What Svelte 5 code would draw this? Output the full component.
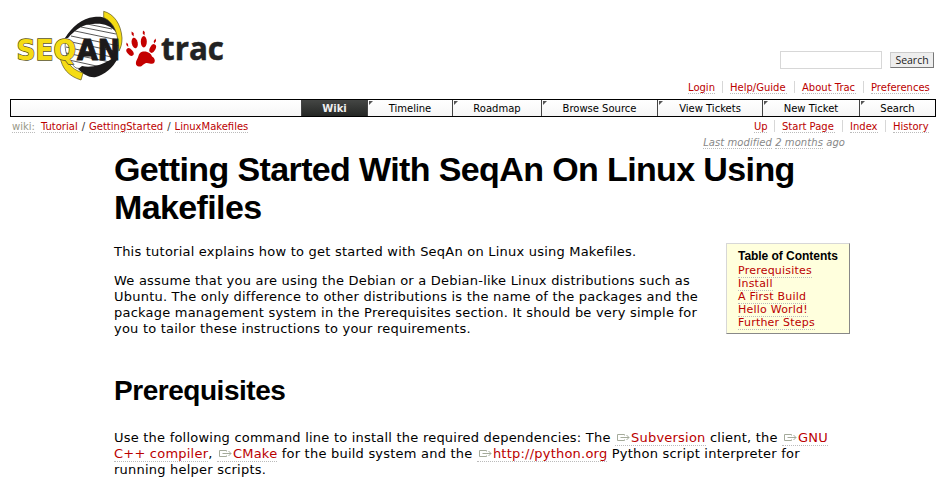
<script>
  const meta = [['Login', 27], ['Help/Guide', 57], ['About Trac', 54], ['Preferences', 58]];
  const context = [['Up', 13], ['Start Page', 53], ['Index', 28], ['History', 36]];
  const tabs = [['Wiki', 66], ['Timeline', 85], ['Roadmap', 89], ['Browse Source', 116], ['View Tickets', 105], ['New Ticket', 97], ['Search', 76]];
  const toc = ['Prerequisites', 'Install', 'A First Build', 'Hello World!', 'Further Steps'];
</script>

{#snippet ext(label)}<a class="ext" href="#top"><svg width="13" height="9" viewBox="0 0 13 9" fill="none" stroke="#a5ab9b"><path d="M7.500 2.500V1.500h-7v6h7V6.500M3.500 4.500h8.500M9.500 2l2.500 2.500L9.500 7" /></svg>{label}</a>{/snippet}

<div class="page">
  <header>
    <svg class="logo" width="210" height="72" viewBox="0 0 210 72">
      <path d="M50 28C58 14 75 8 97 15c9 15 6 30 0 35-12 10-25 10-37 8-8-6-13-18-10-30Z" fill="#fff" stroke="#555" stroke-width=".8" />
      <path d="M71 14l25 5M65 17l35 7M59 21l43 9M55 26l48 10M51 31l51 11M50 37l50 11M50 43l44 9M53 50l32 7" stroke="#444" stroke-width=".9" />
      <path d="M49 28C56 17 66 8 78 7c8-1 16 1 20 7l2 8c-6-7-14-9-23-8-10 0-18 6-25 14Z" fill="#1c1a1b" />
      <path d="M102 48C97 58 88 65 80 67c-6 1-12-2-18-8l4-3c8 2 19 0 31-8Z" fill="#1c1a1b" />
      <path d="M87.700 1.300C98 4 105 14 106 28c0 6-1 9-3 13-1-17-4-28-15.300-33.500Z" fill="#f5dc14" stroke="#5a5320" stroke-width=".7" />
      <path d="M44 47c2 11 8 19 21 23l2-7c-9-3-14-7-17-16Z" fill="#f5dc14" stroke="#5a5320" stroke-width=".7" />
      <text class="seq" x="0.500" y="50" textLength="59.500" lengthAdjust="spacingAndGlyphs">SEQ</text>
      <text class="an" x="61" y="50" textLength="43" lengthAdjust="spacingAndGlyphs">AN</text>
      <g fill="#c40000">
        <path d="M127 41.500c5-.5 8 2 9 5 2 1 4 4 2 6.500-2 2-5-.5-8 0-3 1-4 4-7 3.500-4-.5-3.500-4.500-2-7 2-3 1-7 6-8Z" />
        <ellipse cx="118.700" cy="33" rx="3" ry="5.300" transform="rotate(-14 118.700 33)" />
        <ellipse cx="127.800" cy="31.700" rx="3" ry="5.700" />
        <ellipse cx="136.700" cy="38.500" rx="2.800" ry="4.600" transform="rotate(28 136.700 38.500)" />
        <ellipse cx="114" cy="42" rx="2.700" ry="4.500" transform="rotate(-42 114 42)" />
        <path d="M115.500 21.500l2.200 1.500v3.500l-2-2ZM127 20.500l1.800 1.500-.3 3.500-1.800-2ZM139.500 28.500l.6 2.500-2 2.500-.4-2.500ZM110.500 32.500l1.500 1.500.3 3-2-2Z" />
      </g>
      <text class="trac" x="145" y="50" textLength="63" lengthAdjust="spacingAndGlyphs">trac</text>
    </svg>
    <div class="tools">
      <form><input aria-label="Search" /><button type="button">Search</button></form>
      <nav class="links">
        {#each meta as [label, width]}<span><a href="#top" style:width="{width}px">{label}</a></span>{/each}
      </nav>
    </div>
  </header>
  <nav class="tabs">
    {#each tabs as [label, width], i}<a href="#top" class:active={i === 0} style:width="{width}px">{label}</a>{/each}
  </nav>
  <div class="context">
    <div class="path"><a class="first" href="#top">wiki:</a><a href="#top">Tutorial</a><i>/</i><a href="#top">GettingStarted</a><i>/</i><a href="#top">LinuxMakefiles</a></div>
    <nav class="links">
      {#each context as [label, width]}<span><a href="#top" style:width="{width}px">{label}</a></span>{/each}
    </nav>
  </div>
  <div class="modified"><u>Last modified</u> <u>2 months</u> ago</div>
  <main>
    <h1>Getting Started With SeqAn On Linux Using<br />Makefiles</h1>
    <div class="intro">
      <div>
        <p>This tutorial explains how to get started with SeqAn on Linux using Makefiles.</p>
        <p>We assume that you are using the Debian or a Debian-like Linux distributions such as<br />Ubuntu. The only difference to other distributions is the name of the packages and the<br />package management system in the Prerequisites section. It should be very simple for<br />you to tailor these instructions to your requirements.</p>
      </div>
      <aside>
        <h4>Table of Contents</h4>
        {#each toc as item}<div><a href="#top">{item}</a></div>{/each}
      </aside>
    </div>
    <h2>Prerequisites</h2>
    <p>Use the following command line to install the required dependencies: The {@render ext('Subversion')} client, the {@render ext('GNU')}<br /><a class="ext" href="#top">C++ compiler</a>, {@render ext('CMake')} for the build system and the {@render ext('http://python.org')} Python script interpreter for<br />running helper scripts.</p>
  </main>
</div>

<style>
  :global(body) { margin: 0; background: #fff; overflow: hidden; }
  .page { width: 946px; height: 477px; overflow: hidden; font: 13px/16px Verdana, "DejaVu Sans", sans-serif; color: #000; white-space: nowrap; }
  a { color: #b00; text-decoration: none; border-bottom: 1px dotted #bbb; }
  header { height: 99px; display: flex; justify-content: space-between; padding: 0 10px 0 16px; box-sizing: border-box; }
  .logo { margin-top: 10px; }
  .seq, .an { font: bold 28.500px "DejaVu Sans", sans-serif; paint-order: stroke; }
  .seq { fill: #f5dc14; stroke: #5a5320; stroke-width: 1.4px; }
  .an { fill: #1c1a1b; stroke: #1c1a1b; stroke-width: 1.2px; }
  .trac { font: bold 33px "Open Sans", sans-serif; fill: #222; stroke: #222; stroke-width: .5px; }
  form { display: flex; justify-content: flex-end; align-items: center; gap: 8px; padding: 51px 2px 0 0; height: 18px; }
  input { width: 102px; height: 18px; box-sizing: border-box; border: 1px solid #d7d7d7; padding: 0; }
  button { width: 44px; height: 16px; box-sizing: border-box; padding: 0; border: 1px solid #ccc; border-right-color: #777; border-bottom-color: #777; background: #eee; color: #222; font: 10.500px/13px "Open Sans", sans-serif; }
  .links { display: flex; justify-content: flex-end; font-size: 10px; line-height: 12px; }
  .links span { padding: 0 7px; border-left: 1px solid #d7d7d7; height: 12px; }
  .links span:first-child { border: 0; }
  .links a { display: block; height: 12px; line-height: 13px; }
  .tools .links { margin-top: 12px; }
  .tabs { display: flex; justify-content: flex-end; margin-left: 10px; width: 926px; height: 18px; box-sizing: border-box; border: 1px solid #000; background: linear-gradient(#fff, #f6f6f6); font-size: 10px; line-height: 17px; }
  .tabs a { box-sizing: border-box; position: relative; color: #000; border: 0; border-left: 1px solid #444; text-align: center; }
  .tabs a::before { content: ""; position: absolute; left: 1px; top: 1px; border-top: 4px solid #555; border-right: 4px solid transparent; }
  .tabs .active { background: linear-gradient(#444644, #252725); color: #eee; font-weight: bold; }
  .tabs .active::before { display: none; }
  .context { display: flex; justify-content: space-between; padding: 3px 10px 0 12px; height: 19px; box-sizing: border-box; font-size: 10px; line-height: 13px; }
  .path .first { color: #998; margin-right: 6px; }
  .path i { font-style: normal; color: #333; margin: 0 4px; }
  .modified { width: 845px; text-align: right; font-size: 10px; line-height: 13px; letter-spacing: .07px; font-style: italic; color: #888; }
  u { text-decoration: none; border-bottom: 1px dotted #bbb; }
  main { padding-left: 114px; }
  h1, h2, h4 { font-family: "Liberation Sans", Arial, sans-serif; margin: 0; }
  h1 { font-size: 34px; line-height: 38px; letter-spacing: -.62px; padding-top: 1px; }
  h2 { font-size: 28px; line-height: 32px; letter-spacing: -.46px; margin: 37px 0 23px; }
  p { margin: 1px 0 13px; letter-spacing: .22px; }
  p + p { margin-top: 0; }
  h2 + p { margin-top: 0; }
  .intro { display: flex; justify-content: space-between; width: 736px; height: 95px; margin-top: 17px; }
  .ext svg { margin: 0 1px 0 2px; }
  aside { width: 124px; height: 91px; box-sizing: border-box; border: 1px solid #d7d7d7; border-right-color: #888; border-bottom-color: #888; background: #ffffdd; padding: 5px 11px; font-size: 11px; line-height: 13px; letter-spacing: .22px; }
  h4 { font-size: 12px; line-height: 14px; letter-spacing: -.04px; padding-bottom: 1px; }
</style>
